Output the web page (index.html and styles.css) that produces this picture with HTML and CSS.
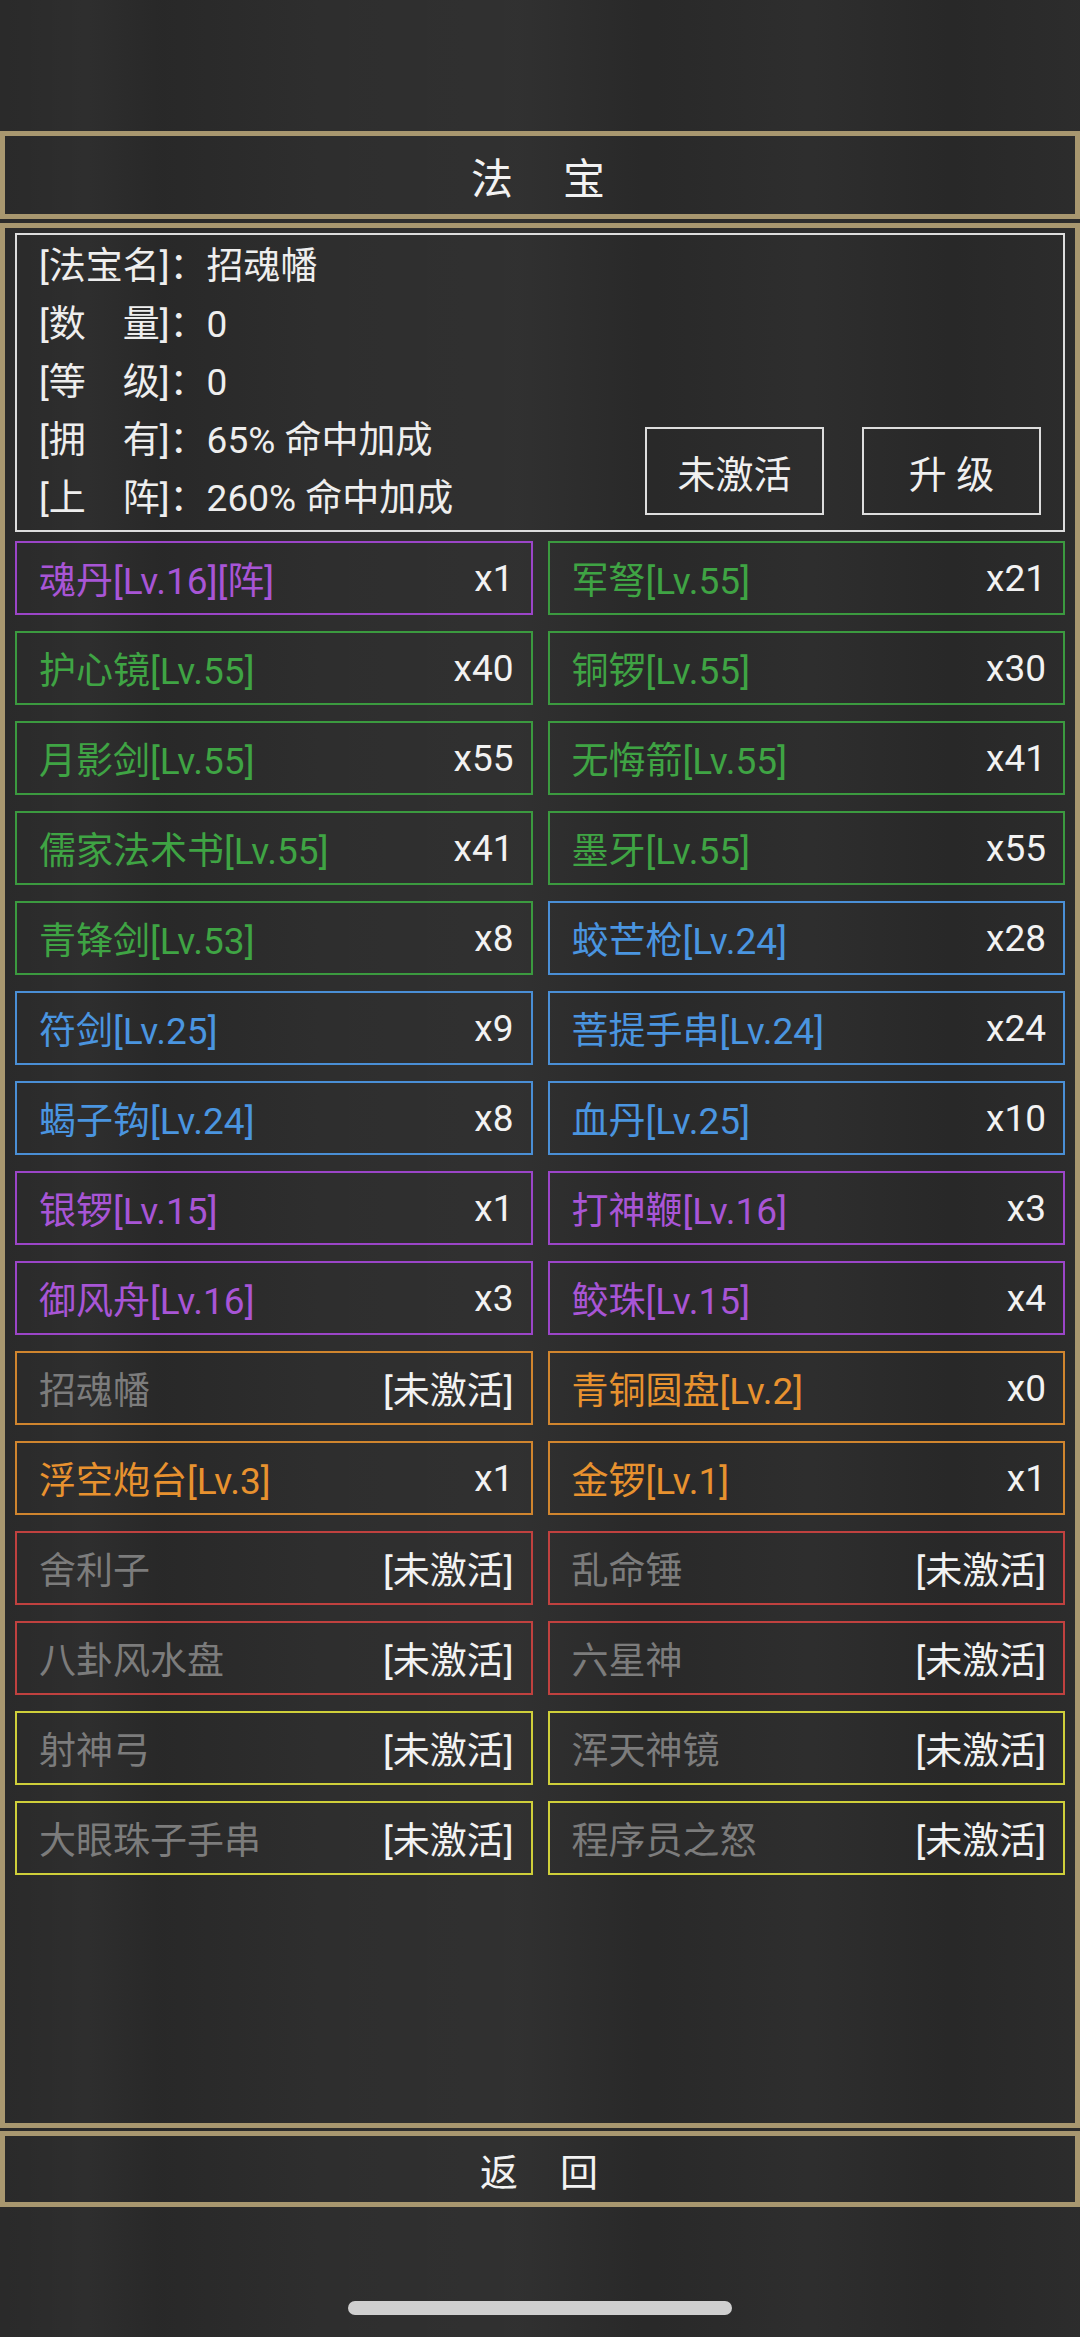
FILE: index.html
```
<!DOCTYPE html>
<html lang="zh-CN">
<head>
    <meta charset="UTF-8">
    <meta name="viewport" content="width=device-width, initial-scale=1.0">
    <title>法宝</title>
    <link rel="stylesheet" href="styles.css">
</head>
<body>
    <div class="screen">
        <div class="title-bar">法　宝</div>

        <div class="panel">
            <!-- 当前法宝信息 -->
            <div class="info">
                <div class="info-lines">
                    <div>[法宝名]：招魂幡</div>
                    <div>[数　量]：0</div>
                    <div>[等　级]：0</div>
                    <div>[拥　有]：65% 命中加成</div>
                    <div>[上　阵]：260% 命中加成</div>
                </div>
                <div class="info-actions">
                    <button class="btn">未激活</button>
                    <button class="btn">升 级</button>
                </div>
            </div>

            <!-- 法宝列表 -->
            <div class="grid">
                <div class="item purple"><span class="name">魂丹[Lv.16][阵]</span><span class="count">x1</span></div>
                <div class="item green"><span class="name">军弩[Lv.55]</span><span class="count">x21</span></div>
                <div class="item green"><span class="name">护心镜[Lv.55]</span><span class="count">x40</span></div>
                <div class="item green"><span class="name">铜锣[Lv.55]</span><span class="count">x30</span></div>
                <div class="item green"><span class="name">月影剑[Lv.55]</span><span class="count">x55</span></div>
                <div class="item green"><span class="name">无悔箭[Lv.55]</span><span class="count">x41</span></div>
                <div class="item green"><span class="name">儒家法术书[Lv.55]</span><span class="count">x41</span></div>
                <div class="item green"><span class="name">墨牙[Lv.55]</span><span class="count">x55</span></div>
                <div class="item green"><span class="name">青锋剑[Lv.53]</span><span class="count">x8</span></div>
                <div class="item blue"><span class="name">蛟芒枪[Lv.24]</span><span class="count">x28</span></div>
                <div class="item blue"><span class="name">符剑[Lv.25]</span><span class="count">x9</span></div>
                <div class="item blue"><span class="name">菩提手串[Lv.24]</span><span class="count">x24</span></div>
                <div class="item blue"><span class="name">蝎子钩[Lv.24]</span><span class="count">x8</span></div>
                <div class="item blue"><span class="name">血丹[Lv.25]</span><span class="count">x10</span></div>
                <div class="item purple"><span class="name">银锣[Lv.15]</span><span class="count">x1</span></div>
                <div class="item purple"><span class="name">打神鞭[Lv.16]</span><span class="count">x3</span></div>
                <div class="item purple"><span class="name">御风舟[Lv.16]</span><span class="count">x3</span></div>
                <div class="item purple"><span class="name">鲛珠[Lv.15]</span><span class="count">x4</span></div>
                <div class="item orange off"><span class="name">招魂幡</span><span class="count">[未激活]</span></div>
                <div class="item orange"><span class="name">青铜圆盘[Lv.2]</span><span class="count">x0</span></div>
                <div class="item orange"><span class="name">浮空炮台[Lv.3]</span><span class="count">x1</span></div>
                <div class="item orange"><span class="name">金锣[Lv.1]</span><span class="count">x1</span></div>
                <div class="item red off"><span class="name">舍利子</span><span class="count">[未激活]</span></div>
                <div class="item red off"><span class="name">乱命锤</span><span class="count">[未激活]</span></div>
                <div class="item red off"><span class="name">八卦风水盘</span><span class="count">[未激活]</span></div>
                <div class="item red off"><span class="name">六星神</span><span class="count">[未激活]</span></div>
                <div class="item yellow off"><span class="name">射神弓</span><span class="count">[未激活]</span></div>
                <div class="item yellow off"><span class="name">浑天神镜</span><span class="count">[未激活]</span></div>
                <div class="item yellow off"><span class="name">大眼珠子手串</span><span class="count">[未激活]</span></div>
                <div class="item yellow off"><span class="name">程序员之怒</span><span class="count">[未激活]</span></div>
            </div>
        </div>

        <div class="back-bar">返　回</div>
        <div class="home-bar"></div>
    </div>
</body>
</html>
```

FILE: styles.css
```
* {
    box-sizing: border-box;
}

body {
    margin: 0;
    width: 1080px;
    height: 2337px;
    overflow: hidden;
    font-family: Roboto, "Noto Sans CJK SC", sans-serif;
    color: #eeeeee;
    background:
        linear-gradient(90deg,
            rgba(255, 255, 255, 0.00) 0%,
            rgba(255, 255, 255, 0.02) 8%,
            rgba(0, 0, 0, 0.04) 15%,
            rgba(255, 255, 255, 0.02) 30%,
            rgba(255, 255, 255, 0.03) 48%,
            rgba(0, 0, 0, 0.03) 60%,
            rgba(255, 255, 255, 0.02) 75%,
            rgba(0, 0, 0, 0.05) 88%,
            rgba(255, 255, 255, 0.01) 100%),
        #2a2a2a;
}

.screen {
    padding-top: 131px;
}

/* 标题栏 / 返回栏 */
.title-bar,
.back-bar {
    display: flex;
    align-items: center;
    justify-content: center;
    border: 5px solid #a8976f;
    color: #f2f2f2;
}

.title-bar {
    height: 88px;
    font-size: 42px;
    letter-spacing: 4px;
}

.back-bar {
    margin-top: 3px;
    height: 76px;
    font-size: 38px;
    letter-spacing: 2px;
}

.panel {
    margin-top: 4px;
    height: 1905px;
    border: 5px solid #a8976f;
    padding: 5px 10px;
}

/* 信息框 */
.info {
    height: 299px;
    border: 2px solid #dddddd;
    padding: 3px 22px 0 22px;
    display: flex;
    justify-content: space-between;
    font-size: 37px;
}

.info-lines div {
    line-height: 58px;
    white-space: nowrap;
}

.info-actions {
    align-self: flex-end;
    display: flex;
    gap: 38px;
    margin-bottom: 15px;
}

.btn {
    width: 179px;
    height: 88px;
    padding: 0;
    border: 2px solid #dddddd;
    background: transparent;
    color: #f0f0f0;
    font-family: inherit;
    font-size: 38px;
}

/* 法宝列表 */
.grid {
    margin-top: 9px;
    display: grid;
    grid-template-columns: 1fr 1fr;
    column-gap: 15px;
    row-gap: 16px;
}

.item {
    height: 74px;
    border: 2px solid;
    padding: 0 17px 0 22px;
    display: flex;
    align-items: center;
    justify-content: space-between;
    font-size: 37px;
    white-space: nowrap;
}

.count {
    color: #f2f2f2;
}

.purple { border-color: #9b45c8; color: #a855d6; }
.green  { border-color: #3b9a3f; color: #3fa444; }
.blue   { border-color: #4a8fd6; color: #4a95e0; }
.orange { border-color: #d0852e; color: #e8922f; }
.red    { border-color: #c0413f; }
.yellow { border-color: #cfcf3a; }

.off .name {
    color: #7c7c7c;
}

.home-bar {
    width: 384px;
    height: 14px;
    margin: 94px auto 0;
    border-radius: 7px;
    background: #cfcfcf;
}
```
